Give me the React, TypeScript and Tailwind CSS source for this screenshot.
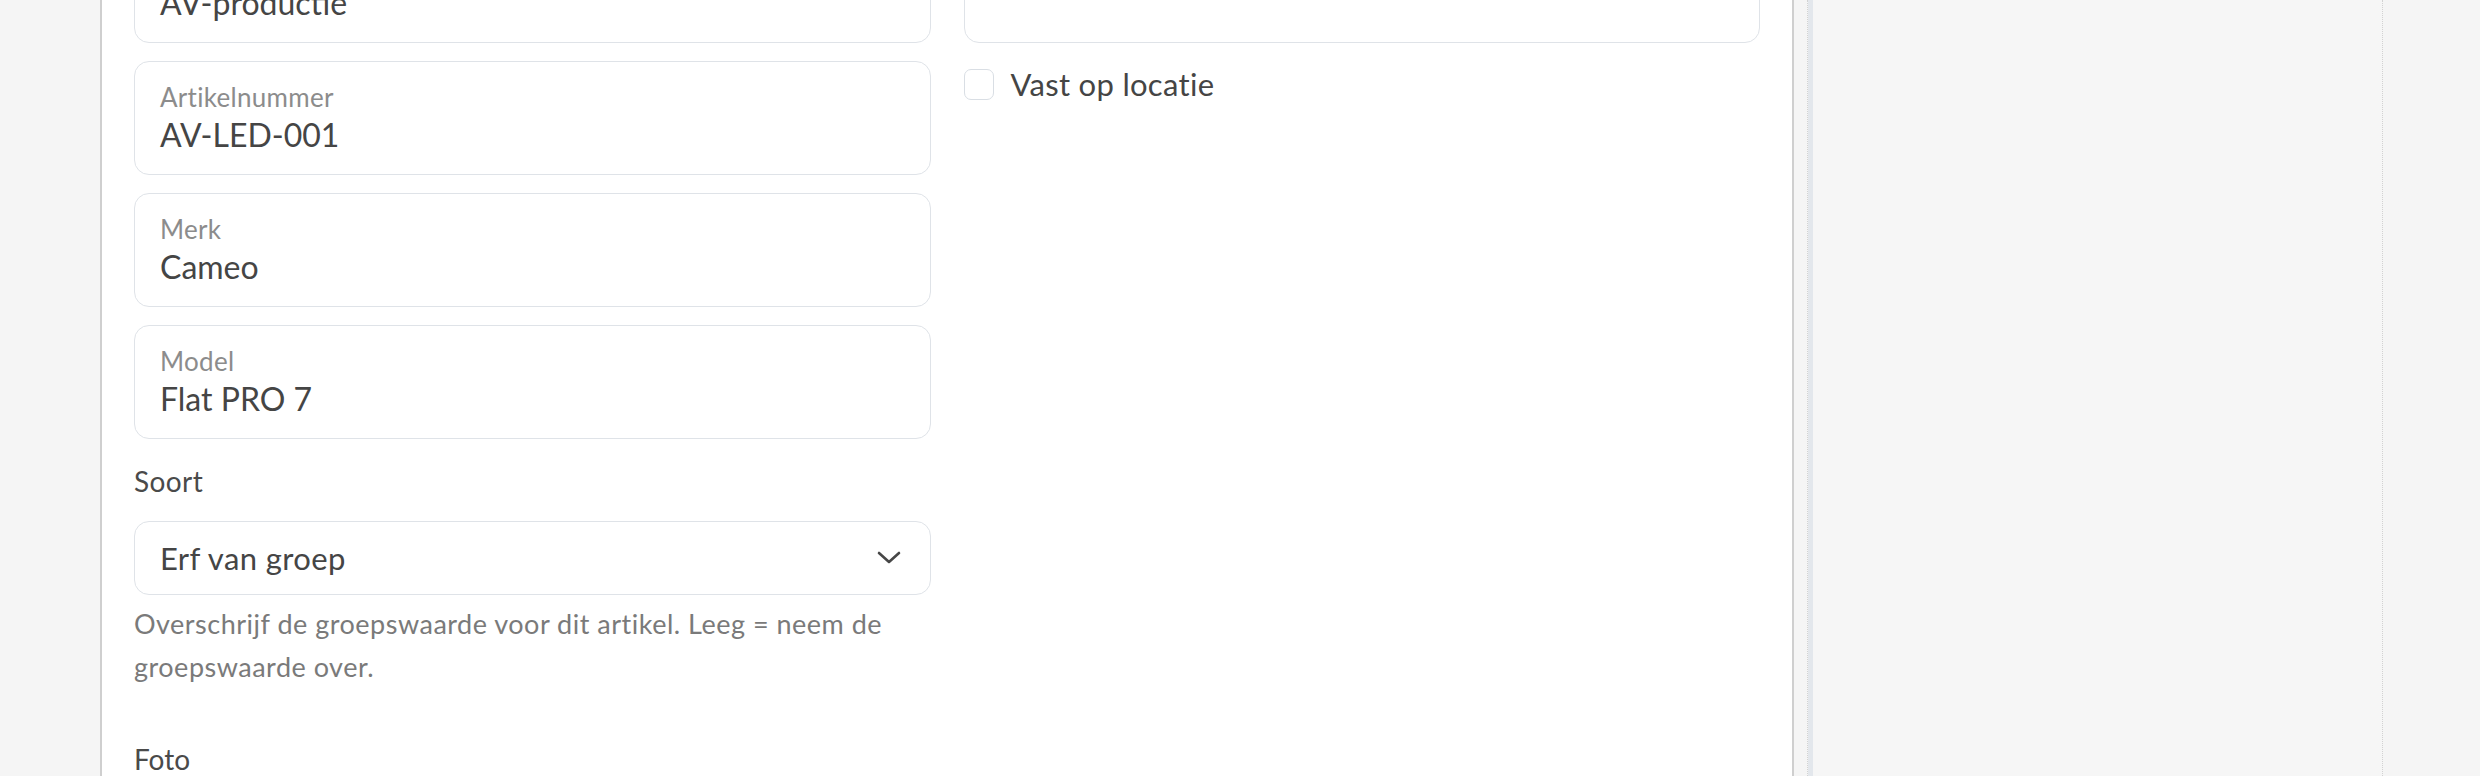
import React from 'react';

type FieldProps = {
  label: string;
  value: string;
};

const FONT = 'font-["Lato","Liberation_Sans",sans-serif]';

const FieldBox = ({ label, value }: FieldProps) => {
  return (
    <div className="h-[114px] rounded-[15px] border-[1.5px] border-[#dfe3e8] bg-white px-[25px] pt-[19px]">
      <div className="text-[26px] leading-[32px] tracking-[0.3px] text-[#8c8c8c]">{label}</div>
      <div className="text-[32px] leading-[44px] text-[#454545]">{value}</div>
    </div>
  );
};

const ChevronDown = () => (
  <svg width="24" height="14" viewBox="0 0 24 14" fill="none">
    <polyline
      points="2,2 12,11 22,2"
      stroke="#474747"
      strokeWidth="2.6"
      strokeLinecap="round"
      strokeLinejoin="round"
    />
  </svg>
);

export default function App() {
  return (
    <div className={`flex h-[776px] w-[2480px] overflow-hidden bg-[#f5f5f5] ${FONT}`}>
      <div className="w-[100px] shrink-0" />

      {/* form card */}
      <div className="w-[1694px] shrink-0 border-x-2 border-[#cfcfcf] bg-white px-[32px]">
        <div className="mt-[-71px] grid grid-cols-2 gap-x-[33px]">
          <div className="flex flex-col">
            <FieldBox label="Groep" value="AV-productie" />
            <div className="mt-[18px]">
              <FieldBox label="Artikelnummer" value="AV-LED-001" />
            </div>
            <div className="mt-[18px]">
              <FieldBox label="Merk" value="Cameo" />
            </div>
            <div className="mt-[18px]">
              <FieldBox label="Model" value="Flat PRO 7" />
            </div>

            <div className="mt-[24px] text-[28px] leading-[36px] tracking-[0.4px] text-[#4a4a4a]">Soort</div>
            <div className="mt-[22px] flex h-[74px] items-center justify-between rounded-[15px] border-[1.5px] border-[#dfe3e8] bg-white pl-[25px] pr-[29px]">
              <span className="text-[31px] leading-[38px] tracking-[0.4px] text-[#454545]">Erf van groep</span>
              <ChevronDown />
            </div>
            <p className="mt-[7px] text-[27px] leading-[43px] tracking-[0.5px] text-[#7a7a7a]">
              Overschrijf de groepswaarde voor dit artikel. Leeg = neem de groepswaarde over.
            </p>

            <div className="mt-[53px] text-[28px] leading-[36px] text-[#4a4a4a]">Foto</div>
          </div>

          <div className="flex flex-col">
            <div className="h-[114px] rounded-[15px] border-[1.5px] border-[#dfe3e8] bg-white" />
            <label className="mt-[22px] flex items-center gap-[17px]">
              <span className="h-[31px] w-[30px] rounded-[7px] border-[1.5px] border-[#d9dee4] bg-white" />
              <span className="text-[31px] leading-[38px] tracking-[0.3px] text-[#454545]">Vast op locatie</span>
            </label>
          </div>
        </div>
      </div>

      {/* side panel */}
      <div className="ml-[13px] flex w-[576px] shrink-0 border-x border-dotted border-[#d2d2d2]">
        <div className="w-[5px] bg-[#e3e7ec]" />
        <div className="flex-1 bg-[#f6f6f6]" />
      </div>
    </div>
  );
}
